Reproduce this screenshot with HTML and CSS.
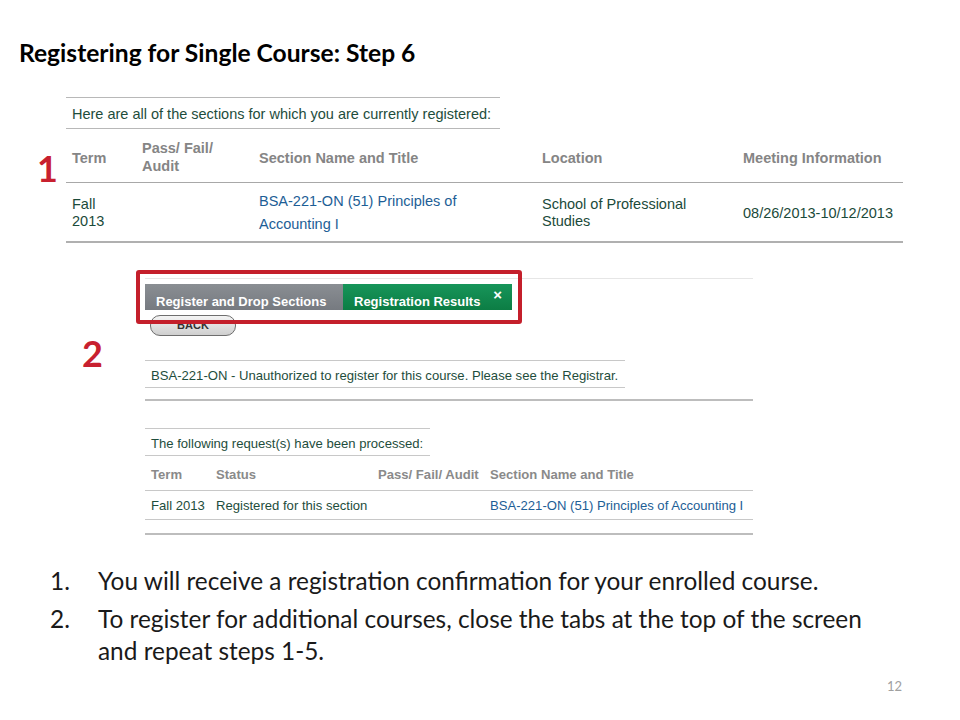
FILE: index.html
```html
<!DOCTYPE html>
<html>
<head>
<meta charset="utf-8">
<link rel="stylesheet" href="styles.css">
</head>
<body>
<div class="slide">
  <h1 class="title">Registering for Single Course: Step 6</h1>

  <div class="shot1">
    <div class="intro">Here are all of the sections for which you are currently registered:</div>
    <div class="grid1 head1">
      <div>Term</div>
      <div>Pass/ Fail/<br>Audit</div>
      <div>Section Name and Title</div>
      <div>Location</div>
      <div>Meeting Information</div>
    </div>
    <div class="grid1 row1">
      <div>Fall<br>2013</div>
      <div></div>
      <div class="link tall">BSA-221-ON (51) Principles of<br>Accounting I</div>
      <div>School of Professional<br>Studies</div>
      <div>08/26/2013-10/12/2013</div>
    </div>
  </div>

  <div class="shot2">
    <div class="faint"></div>
    <div class="tabs">
      <div class="tab tab-gray">Register and Drop Sections</div>
      <div class="tab tab-green">Registration Results <span class="x">×</span></div>
    </div>
    <div class="back">BACK</div>
    <div class="msg">BSA-221-ON - Unauthorized to register for this course. Please see the Registrar.</div>
    <div class="rule"></div>
    <div class="processed">The following request(s) have been processed:</div>
    <div class="grid2 head2">
      <div>Term</div>
      <div>Status</div>
      <div>Pass/ Fail/ Audit</div>
      <div>Section Name and Title</div>
    </div>
    <div class="grid2 row2">
      <div>Fall 2013</div>
      <div>Registered for this section</div>
      <div></div>
      <div class="link">BSA-221-ON (51) Principles of Accounting I</div>
    </div>
    <div class="rule rule-end"></div>
  </div>

  <ol class="steps">
    <li><span class="num">1.</span><span>You will receive a registration confirmation for your enrolled course.</span></li>
    <li><span class="num">2.</span><span>To register for additional courses, close the tabs at the top of the screen and repeat steps 1-5.</span></li>
  </ol>

  <div class="pagenum">12</div>

  <div class="redbox"></div>
  <div class="callout callout-1">1</div>
  <div class="callout callout-2">2</div>
</div>
</body>
</html>
```

FILE: styles.css
```css
html, body {
  margin: 0;
  padding: 0;
  background: #fff;
}
.slide {
  position: relative;
  width: 960px;
  height: 720px;
  overflow: hidden;
  font-family: Lato, "Open Sans", sans-serif;
}
.title {
  margin: 0;
  padding: 39px 0 0 19px;
  font-size: 24.6px;
  line-height: 28px;
  font-weight: 700;
  color: #000;
}

/* first screenshot */
.shot1 {
  margin: 30px 0 0 66px;
  width: 837px;
  font-family: "Liberation Sans", Arial, sans-serif;
  font-size: 14.5px;
}
.intro {
  width: 428px;
  border-top: 1px solid #b8b8b8;
  border-bottom: 1px solid #b8b8b8;
  padding: 1px 0 0 6px;
  height: 29px;
  line-height: 30px;
  color: #1e4d3c;
}
.grid1 {
  display: grid;
  grid-template-columns: 70px 117px 283px 201px 166px;
  align-items: center;
}
.grid1 > div {
  padding-left: 6px;
}
.head1 {
  height: 54px;
  border-bottom: 1px solid #a8a8a8;
  color: #858585;
  font-weight: 700;
  line-height: 18px;
  padding-top: 2px;
  box-sizing: border-box;
}
.head1 > div:first-child,
.head1 > div:nth-child(n+3) {
  padding-top: 3px;
}
.row1 {
  height: 60px;
  border-bottom: 2px solid #b0b0b0;
  color: #1b4a3a;
  line-height: 17px;
  box-sizing: border-box;
  padding-top: 2px;
}
.row1 .tall {
  line-height: 23px;
}
.link {
  color: #1d5e96;
}

/* second screenshot */
.shot2 {
  margin: 35px 0 0 145px;
  width: 608px;
  font-family: "Liberation Sans", Arial, sans-serif;
  font-size: 13.1px;
}
.faint {
  height: 1px;
  background: #e6e6e6;
}
.tabs {
  display: flex;
  margin-top: 5px;
  height: 26px;
}
.tab {
  color: #fff;
  font-weight: 700;
  font-size: 13px;
  line-height: 25px;
  padding: 5px 0 0 11px;
  box-sizing: border-box;
}
.tab-gray {
  width: 198px;
  background: linear-gradient(#8a8e93, #767a80);
}
.tab-green {
  width: 169px;
  background: linear-gradient(#17955a, #0c7d44);
  position: relative;
}
.x {
  position: absolute;
  right: 10px;
  top: -2px;
  font-size: 15px;
}
.back {
  margin: 5px 0 0 5px;
  width: 84px;
  height: 19px;
  border: 1px solid #6e6e6e;
  border-radius: 10px;
  background: linear-gradient(#f4f4f4, #cfcfcf);
  font-size: 11px;
  font-weight: 700;
  color: #333;
  text-align: center;
  line-height: 19px;
}
.msg {
  margin-top: 24px;
  width: 474px;
  padding: 2px 0 0 6px;
  border-top: 1px solid #c8c8c8;
  border-bottom: 1px solid #c8c8c8;
  height: 24px;
  line-height: 26px;
  color: #1e4d3c;
}
.rule {
  margin-top: 11px;
  height: 2px;
  background: #bdbdbd;
}
.processed {
  margin-top: 27px;
  width: 279px;
  padding: 2px 0 0 6px;
  border-top: 1px solid #c8c8c8;
  border-bottom: 1px solid #c8c8c8;
  height: 24px;
  line-height: 26px;
  color: #1e4d3c;
}
.grid2 {
  display: grid;
  grid-template-columns: 65px 162px 112px 269px;
  align-items: center;
}
.grid2 > div {
  padding-left: 6px;
}
.head2 {
  height: 35px;
  border-bottom: 1px solid #c8c8c8;
  color: #8a8a8a;
  font-weight: 700;
  padding-top: 3px;
  box-sizing: border-box;
}
.row2 {
  height: 29px;
  border-bottom: 1px solid #c8c8c8;
  color: #1e4d3c;
  padding-top: 1px;
  box-sizing: border-box;
}
.rule-end {
  margin-top: 13px;
}

/* bullets */
.steps {
  list-style: none;
  margin: 30px 0 0 50px;
  padding: 0;
  width: 840px;
  font-size: 24.4px;
  line-height: 32px;
  color: #1a1a1a;
}
.steps li {
  display: grid;
  grid-template-columns: 48px 1fr;
  margin-bottom: 6px;
}

.pagenum {
  position: absolute;
  left: 887px;
  top: 678px;
  font-size: 13px;
  color: #a0a0a0;
}

/* annotations */
.redbox {
  position: absolute;
  left: 136px;
  top: 270px;
  width: 378px;
  height: 46px;
  border: 4px solid #c41f2b;
  border-radius: 3px;
}
.callout {
  position: absolute;
  font-family: Lato, "Open Sans", sans-serif;
  font-weight: 700;
  font-size: 36px;
  line-height: 36px;
  color: #c8202f;
}
.callout-1 {
  left: 37px;
  top: 150px;
}
.callout-2 {
  left: 82px;
  top: 335px;
}
```
